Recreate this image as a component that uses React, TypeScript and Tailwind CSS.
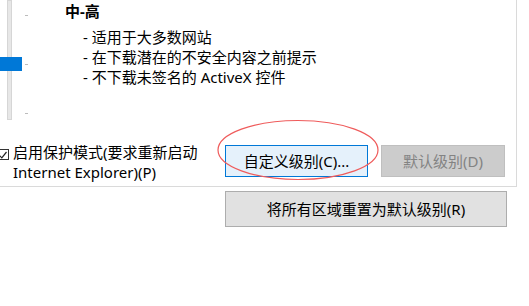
import React from 'react';

const font = {
  fontFamily: '"Noto Sans", "Noto Sans CJK SC", sans-serif',
};

function LevelSlider() {
  return (
    <div className="relative w-[32px] h-[120px] shrink-0">
      {/* track */}
      <div className="absolute left-[7px] top-0 h-[120px] w-[5px] bg-[#e7e7e7] border border-[#d6d6d6]" />
      {/* ticks */}
      <div className="absolute left-[25px] top-[15px] w-[3px] h-px bg-[#bcbcbc]" />
      <div className="absolute left-[25px] top-[64px] w-[3px] h-px bg-[#bcbcbc]" />
      <div className="absolute left-[25px] top-[113px] w-[3px] h-px bg-[#bcbcbc]" />
      {/* thumb */}
      <div className="absolute left-0 top-[57px] w-[22px] h-[14px] bg-[#0078d7]" />
    </div>
  );
}

export default function App() {
  return (
    <div className="w-[529px] h-[306px] bg-white text-[15px] text-black overflow-hidden" style={font}>
      {/* Security level panel */}
      <div className="relative w-[517px] h-[187px] border-r border-b border-[#dadada] flex flex-col">
        <div className="flex">
          <LevelSlider />
          <div className="ml-[33px] pt-[1px]">
            <div className="font-bold leading-[20px]">中-高</div>
            <ul className="mt-[6px] ml-[18px] leading-[20px]">
              <li>- 适用于大多数网站</li>
              <li>- 在下载潜在的不安全内容之前提示</li>
              <li>- 不下载未签名的 ActiveX 控件</li>
            </ul>
          </div>
        </div>

        <div className="flex items-start mt-[22px]">
          <label className="flex items-start w-[225px] shrink-0 leading-[20px]">
            <span className="-ml-[4px] mt-[7px] w-[13px] h-[11px] border border-[#333] shrink-0 flex items-center justify-end pr-[1px]">
              <svg width="8" height="8" viewBox="0 0 8 8">
                <path d="M0.5 4.5 L2.8 6.8 L7.5 1" fill="none" stroke="#222" strokeWidth="1.2" />
              </svg>
            </span>
            <span className="ml-[4px]">
              启用保护模式(要求重新启动
              <br />
              Internet Explorer)(P)
            </span>
          </label>
          <button className="mt-[3px] w-[143px] h-[32px] bg-[#e5f1fb] border border-[#0078d7] flex items-center justify-center">
            自定义级别(C)...
          </button>
          <button
            disabled
            className="mt-[3px] ml-[13px] w-[124px] h-[32px] bg-[#cccccc] border border-[#bfbfbf] text-[#838383] flex items-center justify-center"
          >
            默认级别(D)
          </button>
        </div>

        {/* red annotation ellipse */}
        <svg className="absolute left-[216px] top-[119px] pointer-events-none" width="166" height="64" viewBox="0 0 166 64">
          <ellipse cx="82" cy="31" rx="80" ry="29.5" fill="none" stroke="#ef5b5b" strokeWidth="1.2" />
        </svg>
      </div>

      {/* Reset all zones */}
      <div className="flex pl-[225px] pt-[4px]">
        <button className="w-[282px] h-[36px] bg-[#e1e1e1] border border-[#adadad] flex items-center justify-center">
          将所有区域重置为默认级别(R)
        </button>
      </div>
    </div>
  );
}
